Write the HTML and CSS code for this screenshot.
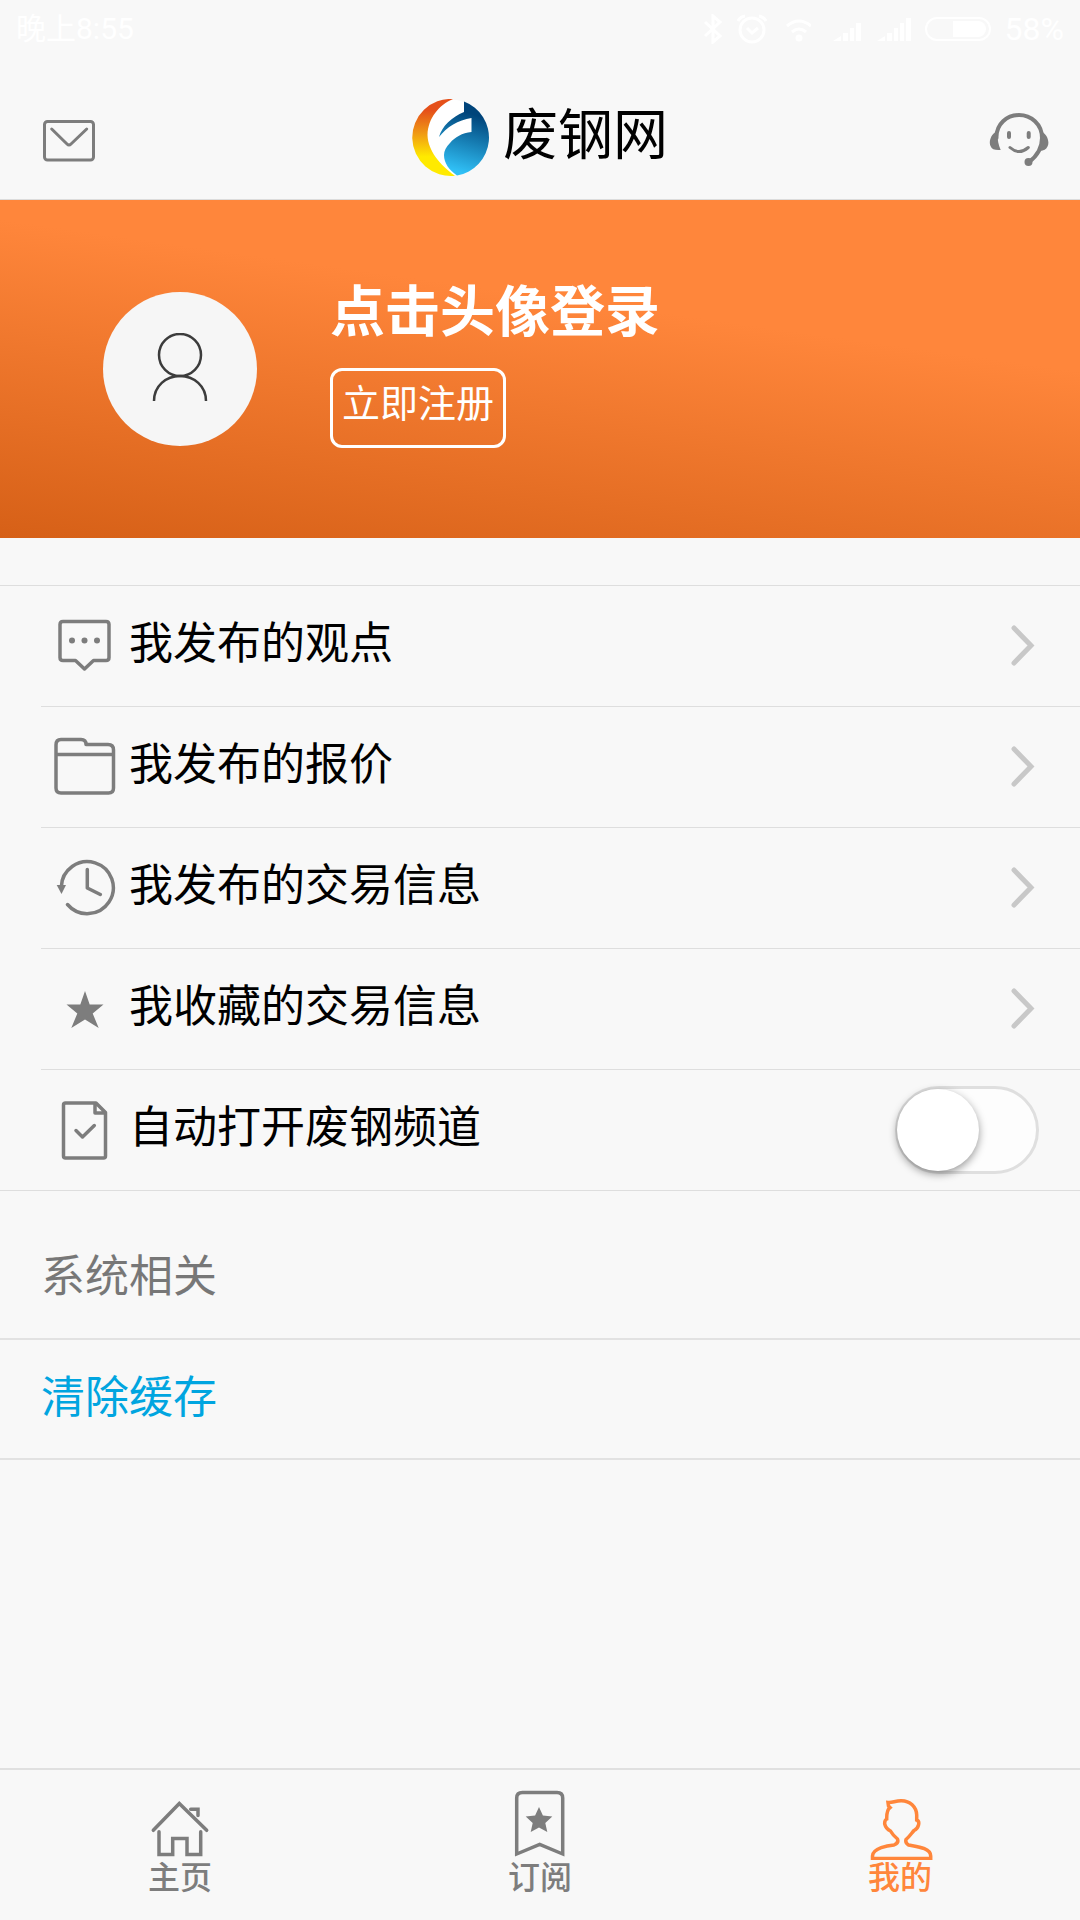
FILE: index.html
```html
<!DOCTYPE html>
<html lang="zh-CN">
<head>
  <meta charset="UTF-8" />
  <meta name="viewport" content="width=device-width, initial-scale=1" />
  <title>废钢网 – 我的</title>
  <link rel="stylesheet" href="styles.css">
</head>
<body>
  <div class="statusbar">
    <span class="clock">晚上8:55</span>
    <div class="status-icons">
      <svg width="20" height="30" viewBox="0 0 20 30" fill="none" stroke="#fff" stroke-width="3"><path d="M2 8l15 14-7 6V2l7 6L2 22"/></svg>
      <svg width="30" height="30" viewBox="0 0 30 30" fill="none" stroke="#fff" stroke-width="3"><circle cx="15" cy="16" r="12"/><path d="M10 14l5 5 6-5M1 7q2-4 7-5M29 7q-2-4-7-5"/></svg>
      <svg width="30" height="30" viewBox="-3 0 30 30" fill="none" stroke="#fff" stroke-width="3"><path d="M3 12q12-10 24 0M8 18q7-6 14 0"/><circle cx="15" cy="24" r="2"/></svg>
      <svg width="36" height="30" viewBox="-8 0 36 30" fill="#fff"><path d="M0 27l8-5v5zM10 19h5v8h-5zM17 14h4v13h-4zM23 9h5v18h-5z"/></svg>
      <svg width="36" height="30" viewBox="-2 0 36 30" fill="#fff"><path d="M0 27l8-5v5zM10 19h5v8h-5zM17 14h4v13h-4zM23 9h4v18h-4zM29 4h5v23h-5z"/></svg>
      <svg width="66" height="30" viewBox="0 0 66 30"><rect x="1" y="4" width="64" height="22" rx="11" fill="none" stroke="#fff" stroke-width="2"/><path d="M28 7h25a8 8 0 0 1 0 16H28z" fill="#fff"/></svg>
      <span class="battery">58%</span>
    </div>
  </div>

  <header class="header">
    <button class="icon-btn" type="button" aria-label="消息">
      <svg width="72" height="72" viewBox="0 0 72 72" fill="none" stroke="#7d7d7d" stroke-width="3" stroke-linecap="round" stroke-linejoin="round">
        <rect x="15.5" y="19.5" width="49" height="38.5" rx="3"/>
        <path d="M22.7 27L38 42Q40 44 42 42L57.7 27"/>
      </svg>
    </button>
    <div class="brand">
      <svg width="77" height="77" viewBox="0 0 77 77">
        <defs>
          <linearGradient id="fire" x1="0" y1="0" x2="0" y2="1">
            <stop offset="0.15" stop-color="#e5501a"/>
            <stop offset="0.45" stop-color="#f09a14"/>
            <stop offset="0.75" stop-color="#ffea00"/>
          </linearGradient>
          <linearGradient id="sea" x1="0.6" y1="0" x2="0.4" y2="1">
            <stop offset="0.15" stop-color="#00447a"/>
            <stop offset="0.95" stop-color="#30c0f6"/>
          </linearGradient>
        </defs>
        <circle cx="38.5" cy="38.5" r="38" fill="#fff"/>
        <path d="M41 0A38.5 38.5 0 1 0 43 76.7C28 66 16 52 15.5 36C16 19 27 6 41 0z" fill="url(#fire)"/>
        <path d="M52 2.5V13C40 18 30 27 27 38C35 28 46 21 59.5 19V33C50 34 43 38 38 44C34 48 32 52 32 56C32 64 37 71 45 76.5A38.5 38.5 0 0 0 52 2.5z" fill="url(#sea)"/>
      </svg>
      <h1>废钢网</h1>
    </div>
    <button class="icon-btn" type="button" aria-label="客服">
      <svg width="72" height="72" viewBox="0 0 72 72" fill="none" stroke="#7d7d7d" stroke-width="4" stroke-linecap="round">
        <path d="M17.5 36C17 22 28 13 40 13S63 22 63 36C63 46 58 54 50 60"/>
        <path d="M17 30C12 32 9.5 40 11.5 44C13 47.5 16 48.4 21.7 48C19.5 43 18.5 38 18.5 33zM63 30C68 32 71 40 68.5 44.5C67 47.5 65 48.5 61 49C62.5 44 63 38 63 30z" fill="#7d7d7d" stroke="none"/>
        <path d="M30 31v4M49.7 31v4"/>
        <path d="M31 45.5Q40 53.5 49.3 45.5" stroke-width="3"/>
        <circle cx="49.5" cy="60" r="4" fill="#7d7d7d" stroke="none"/>
      </svg>
    </button>
  </header>

  <section class="hero">
    <div class="avatar-col">
      <button class="avatar" type="button" aria-label="登录">
        <svg width="72" height="72" viewBox="0 0 72 72" fill="none" stroke="#3c3c3c" stroke-width="2.5">
          <circle cx="36" cy="22" r="21"/>
          <path d="M10 68C10 53 22 43 36 43S62 53 62 68"/>
        </svg>
      </button>
    </div>
    <div class="hero-text">
      <h2>点击头像登录</h2>
      <button class="register" type="button">立即注册</button>
    </div>
  </section>

  <main>
    <ul class="list">
      <li>
        <a class="row" href="#">
          <svg class="row-icon" viewBox="0 0 64 64">
            <path d="M10 7.5H53Q56 7.5 56 10.5V43.5Q56 46.5 53 46.5H40.5L31.5 55L22.5 46.5H10Q7 46.5 7 43.5V10.5Q7 7.5 10 7.5z"/>
            <g class="solid"><circle cx="19" cy="26.5" r="3"/><circle cx="31.5" cy="26.5" r="3"/><circle cx="44" cy="26.5" r="3"/></g>
          </svg>
          <span>我发布的观点</span>
          <svg class="chevron" viewBox="0 0 24 42"><path d="M3 3L20 20.5L3 38"/></svg>
        </a>
      </li>
      <li>
        <a class="row" href="#">
          <svg class="row-icon" viewBox="0 0 64 64">
            <path d="M33 9.5H55Q60.5 9.5 60.5 15V53Q60.5 58 55.5 58H8Q3 58 3 53V10Q3 4.5 8 4.5H28Q33 4.5 33 9.5zM3 19.5H60.5"/>
          </svg>
          <span>我发布的报价</span>
          <svg class="chevron" viewBox="0 0 24 42"><path d="M3 3L20 20.5L3 38"/></svg>
        </a>
      </li>
      <li>
        <a class="row" href="#">
          <svg class="row-icon" viewBox="0 0 64 64">
            <path d="M8.3 31A26 26 0 1 1 14.5 48.5M34.3 13.5V32L47.3 38.5"/>
            <path class="solid" d="M3.7 29H13L8.5 38z"/>
          </svg>
          <span>我发布的交易信息</span>
          <svg class="chevron" viewBox="0 0 24 42"><path d="M3 3L20 20.5L3 38"/></svg>
        </a>
      </li>
      <li>
        <a class="row" href="#">
          <svg class="row-icon" viewBox="0 0 64 64">
            <path class="solid" d="M32 14L36.7 27.5H50.5L39.7 36.5L45.7 51L32 42.5L18.3 51L24.3 36.5L13.5 27.5H27.3z"/>
          </svg>
          <span>我收藏的交易信息</span>
          <svg class="chevron" viewBox="0 0 24 42"><path d="M3 3L20 20.5L3 38"/></svg>
        </a>
      </li>
      <li>
        <label class="row" for="autoOpen">
          <svg class="row-icon" viewBox="0 0 64 64">
            <path d="M12.5 5H43L52.5 14.5V58Q52.5 60 50.5 60H12.5Q10.5 60 10.5 58V7Q10.5 5 12.5 5zM42 5V15H52.5M23 32.5L29.5 39L41.3 27.5"/>
          </svg>
          <span>自动打开废钢频道</span>
          <input class="switch" id="autoOpen" type="checkbox" />
        </label>
      </li>
    </ul>

    <h3 class="group-title">系统相关</h3>
    <a class="clear-cache" href="#">清除缓存</a>
  </main>

  <nav class="tabbar">
    <a class="tab" href="#">
      <svg width="72" height="72" viewBox="0 0 72 72">
        <path d="M9.3 42.3L35.3 15.5L62.7 42.3M46.7 21.3H54V27.5M15 43.7V66.5H28.7V50.5H43V66.5H56.7V43.7"/>
      </svg>
      <span>主页</span>
    </a>
    <a class="tab" href="#">
      <svg width="72" height="72" viewBox="0 0 72 72">
        <path d="M12.7 66V10Q12.7 4.5 18.5 4.5H53Q58.7 4.5 58.7 10V66L35.7 56.5z"/>
        <path class="solid" d="M35 19L38.9 27.6L48.3 28.6L41.3 34.9L43.3 44L35 39.4L26.7 44L28.7 34.9L21.7 28.6L31.1 27.6z"/>
      </svg>
      <span>订阅</span>
    </a>
    <a class="tab active" href="#">
      <svg width="72" height="72" viewBox="0 0 72 72">
        <path d="M24.5 18L24 14.5C28 15 31 13 37 12.7C46 12.5 52.5 19 52.7 27V32Q55.5 33 54.5 37Q53.5 41 50 42.5C47 46 45 49 42 51.5Q41 55 44.5 57C51 58.5 66.7 59.5 66.7 68V70.5H8.5V68C9 60 24 57.5 30 57Q35 55 33.5 51C31 49 28.5 46.5 26.5 43Q22 41 20.7 36Q20.5 32 22.7 31C22.7 27 22.5 22 26 19.5z"/>
      </svg>
      <span>我的</span>
    </a>
  </nav>
</body>
</html>
```

FILE: styles.css
```css
* {
  box-sizing: border-box;
}
body {
  margin: 0;
  min-height: 100vh;
  display: flex;
  flex-direction: column;
  background: #f8f8f8;
  color: #000;
  font-family: Roboto, "Noto Sans CJK SC", sans-serif;
}
h1, h2, h3, ul {
  margin: 0;
  padding: 0;
  font-weight: normal;
}
a {
  color: inherit;
  text-decoration: none;
}
button {
  padding: 0;
  border: none;
  background: none;
  font-family: inherit;
  cursor: pointer;
}
svg {
  display: block;
  flex: none;
}

/* status bar */
.statusbar {
  display: flex;
  justify-content: space-between;
  align-items: center;
  height: 58px;
  padding: 0 16px;
  color: #fff;
}
.clock {
  padding-bottom: 6px;
  font-size: 30px;
}
.battery {
  font-size: 32px;
}
.status-icons {
  display: flex;
  align-items: center;
  gap: 14px;
}

/* header */
.header {
  display: flex;
  justify-content: space-between;
  align-items: center;
  padding: 41px 29px 23px;
  border-bottom: 1px solid #dcdcdc;
}
.brand {
  display: flex;
  align-items: center;
  gap: 14px;
}
.brand h1 {
  padding-bottom: 5px;
  font-size: 55px;
  line-height: 72px;
}

/* login */
.hero {
  display: flex;
  align-items: flex-start;
  padding: 76px 0;
  background: linear-gradient(8deg, #d66017, #ff863b 65%);
  color: #fff;
}
.avatar-col {
  width: 33.333%;
  padding: 16px 0;
  display: flex;
  justify-content: center;
}
.avatar {
  display: flex;
  justify-content: center;
  align-items: center;
  width: 154px;
  height: 154px;
  border-radius: 50%;
  background: #f6f6f6;
}
.hero-text {
  margin-left: -30px;
}
.hero-text h2 {
  font-size: 55px;
  line-height: 72px;
  font-weight: bold;
}
.register {
  display: block;
  margin-top: 20px;
  padding: 6px 9px 14px;
  border: 3px solid #fff;
  border-radius: 12px;
  color: #fff;
  font-size: 38px;
  line-height: 54px;
}

/* list */
.list {
  margin-top: 47px;
  border-top: 1px solid #dedede;
  border-bottom: 1px solid #dedede;
  list-style: none;
}
.list li {
  margin-left: 41px;
}
.list li + li {
  border-top: 1px solid #dedede;
}
.row {
  display: flex;
  align-items: center;
  height: 120px;
  padding: 0 41px 0 12px;
  font-size: 44px;
}
.row span {
  flex: 1;
  margin-left: 12px;
  padding-bottom: 4px;
  line-height: 64px;
}
.row-icon {
  width: 64px;
  height: 64px;
  fill: none;
  stroke: #7d7d7d;
  stroke-width: 3.5;
  stroke-linecap: round;
  stroke-linejoin: round;
}
.solid {
  fill: currentColor;
  stroke: none;
}
.row-icon .solid {
  fill: #7d7d7d;
}
.chevron {
  width: 24px;
  height: 42px;
  margin-right: 4px;
  fill: none;
  stroke: #c8c8c8;
  stroke-width: 5;
  stroke-linecap: round;
}
.switch {
  position: relative;
  width: 144px;
  height: 88px;
  margin: 0;
  appearance: none;
  border: 3px solid #dfdfdf;
  border-radius: 44px;
  background: #fdfdfd;
}
.switch::before {
  content: "";
  position: absolute;
  top: 0;
  left: -1px;
  width: 82px;
  height: 82px;
  border-radius: 50%;
  background: #fff;
  box-shadow: 0 3px 8px rgba(0, 0, 0, 0.4);
}
.switch:checked {
  background: #ff863b;
}
.switch:checked::before {
  left: 57px;
}

/* system */
.group-title {
  padding: 54px 41px 29px;
  color: #777;
  font-size: 44px;
  line-height: 64px;
}
.clear-cache {
  display: block;
  padding: 26px 41px 28px;
  border-top: 2px solid #e2e2e2;
  border-bottom: 2px solid #e2e2e2;
  color: #00a5e0;
  font-size: 44px;
  line-height: 64px;
}

/* bottom tabs */
.tabbar {
  display: flex;
  margin-top: auto;
  padding: 18px 0 24px;
  border-top: 2px solid #e0e0e0;
  color: #7d7d7d;
}
.tab {
  flex: 1;
  display: flex;
  flex-direction: column;
  align-items: center;
  font-size: 32px;
  line-height: 36px;
  font-weight: 500;
}
.tab svg {
  fill: none;
  stroke: currentColor;
  stroke-width: 3.5;
  stroke-linecap: round;
}
.tab.active {
  color: #ff863b;
}
.tab .solid {
  fill: currentColor;
  stroke: none;
}
```
